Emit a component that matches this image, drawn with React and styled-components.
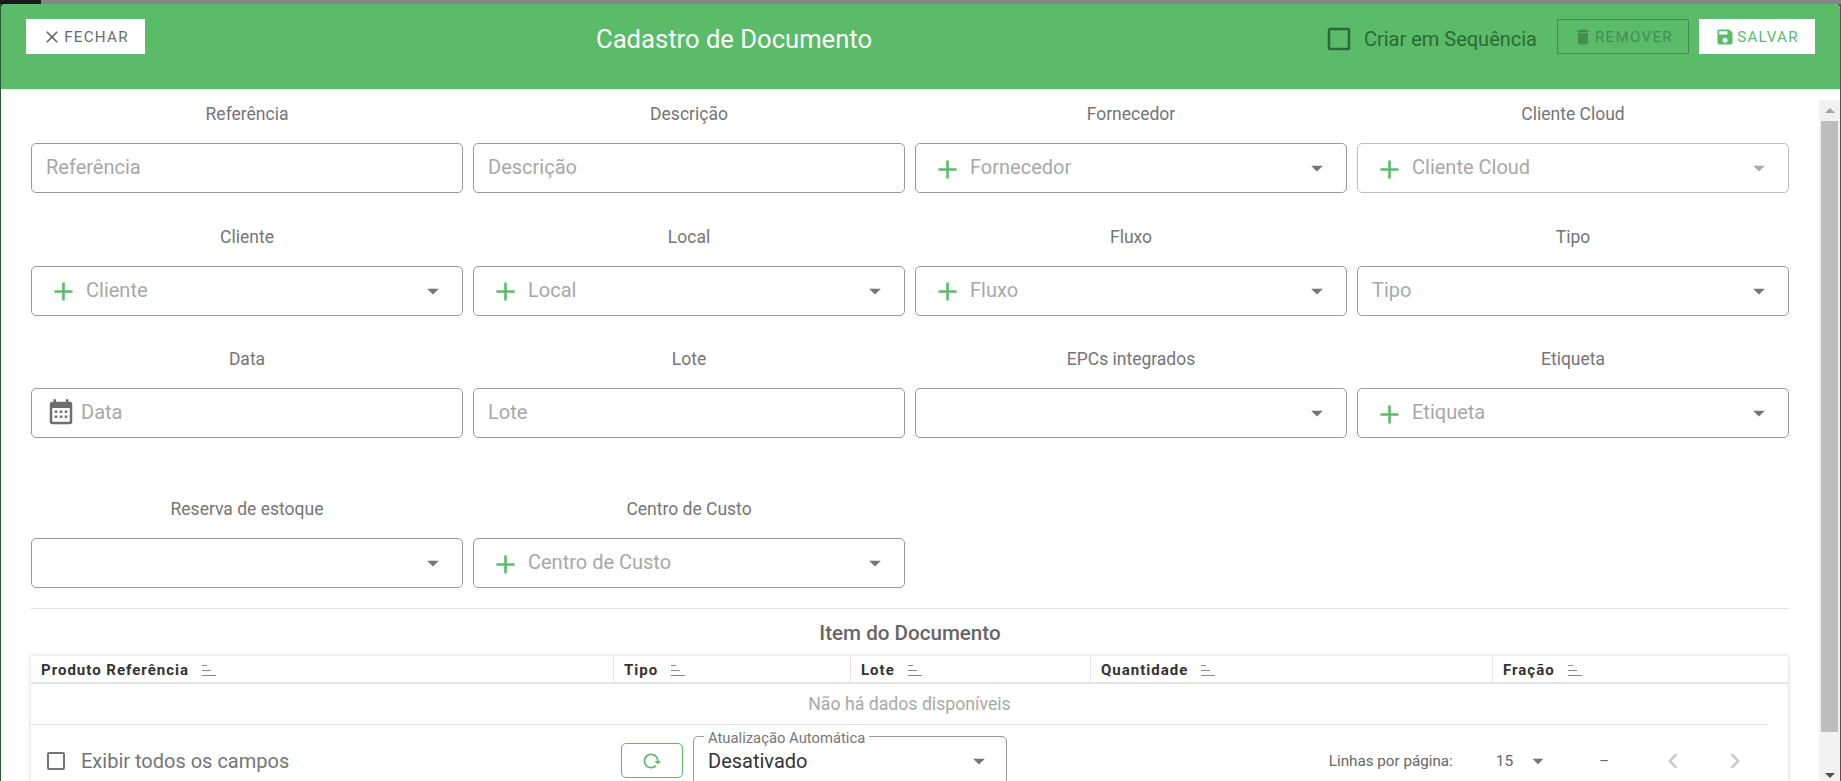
import React from 'react';
import styled, { createGlobalStyle } from 'styled-components';

const ICONS = {
  close: 'M19,6.41L17.59,5L12,10.59L6.41,5L5,6.41L10.59,12L5,17.59L6.41,19L12,13.41L17.59,19L19,17.59L13.41,12L19,6.41Z',
  trash: 'M19,4H15.5L14.5,3H9.5L8.5,4H5V6H19M6,19A2,2 0 0,0 8,21H16A2,2 0 0,0 18,19V7H6V19Z',
  save: 'M15,9H5V5H15M12,19A3,3 0 0,1 9,16A3,3 0 0,1 12,13A3,3 0 0,1 15,16A3,3 0 0,1 12,19M17,3H5C3.89,3 3,3.9 3,5V19A2,2 0 0,0 5,21H19A2,2 0 0,0 21,19V7L17,3Z',
  calendar: 'M9,10V12H7V10H9M13,10V12H11V10H13M17,10V12H15V10H17M19,3A2,2 0 0,1 21,5V19A2,2 0 0,1 19,21H5C3.89,21 3,20.1 3,19V5A2,2 0 0,1 5,3H6V1H8V3H16V1H18V3H19M19,19V8H5V19H19M9,14V16H7V14H9M13,14V16H11V14H13M17,14V16H15V14H17Z',
  plus: 'M19,13H13V19H11V13H5V11H11V5H13V11H19V13Z',
  down: 'M7,10L12,15L17,10H7Z',
  reload: 'M2 12C2 16.97 6.03 21 11 21C13.39 21 15.68 20.06 17.4 18.4L15.9 16.9C14.63 18.25 12.86 19 11 19C4.76 19 1.64 11.46 6.05 7.05C10.46 2.64 18 5.77 18 12H15L19 16H19.1L23 12H20C20 7.03 15.97 3 11 3C6.03 3 2 7.03 2 12Z',
  left: 'M15.41,16.58L10.83,12L15.41,7.41L14,6L8,12L14,18L15.41,16.58Z',
  right: 'M8.59,16.58L13.17,12L8.59,7.41L10,6L16,12L10,18L8.59,16.58Z',
  box: 'M19,3H5C3.89,3 3,3.89 3,5V19A2,2 0 0,0 5,21H19A2,2 0 0,0 21,19V5C21,3.89 20.1,3 19,3M19,5V19H5V5H19Z',
};

const Icon = ({ name, size = 24, color = 'currentColor' }) => (
  <svg width={size} height={size} viewBox="0 0 24 24" fill={color} style={{ flex: 'none' }}>
    <path d={ICONS[name]} />
  </svg>
);

const fields = [
  { label: 'Referência', placeholder: 'Referência' },
  { label: 'Descrição', placeholder: 'Descrição' },
  { label: 'Fornecedor', placeholder: 'Fornecedor', plus: true, select: true },
  { label: 'Cliente Cloud', placeholder: 'Cliente Cloud', plus: true, select: true, disabled: true },
  { label: 'Cliente', placeholder: 'Cliente', plus: true, select: true },
  { label: 'Local', placeholder: 'Local', plus: true, select: true },
  { label: 'Fluxo', placeholder: 'Fluxo', plus: true, select: true },
  { label: 'Tipo', placeholder: 'Tipo', select: true },
  { label: 'Data', placeholder: 'Data', calendar: true },
  { label: 'Lote', placeholder: 'Lote' },
  { label: 'EPCs integrados', select: true },
  { label: 'Etiqueta', placeholder: 'Etiqueta', plus: true, select: true },
];

const lastFields = [
  { label: 'Reserva de estoque', select: true },
  { label: 'Centro de Custo', placeholder: 'Centro de Custo', plus: true, select: true },
];

const columns = [
  { title: 'Produto Referência', width: 583 },
  { title: 'Tipo', width: 237 },
  { title: 'Lote', width: 240 },
  { title: 'Quantidade', width: 402 },
  { title: 'Fração', width: 295 },
];

const Field = ({ label, placeholder, plus, select, calendar, disabled }) => (
  <FieldWrap>
    <FieldLabel>{label}</FieldLabel>
    <InputBox $disabled={disabled} $plain={!plus && !calendar}>
      {plus && <PlusSlot><Icon name="plus" size={31} color="#5abb69" /></PlusSlot>}
      {calendar && <CalendarSlot><Icon name="calendar" size={30} color="#6e6e6e" /></CalendarSlot>}
      <TextInput placeholder={placeholder} readOnly />
      {select && <ArrowSlot><Icon name="down" size={28} color={disabled ? '#aaa' : '#757575'} /></ArrowSlot>}
    </InputBox>
  </FieldWrap>
);

const SortIcon = () => (
  <svg width="14" height="11" viewBox="0 0 14 11" style={{ flex: 'none' }}>
    <path d="M0 .5h5M0 5.5h9M0 10.5h14" stroke="#8a8a8a" strokeWidth="1" fill="none" />
  </svg>
);

const App = () => (
  <Page>
    <GlobalStyle />
    <Modal>
      <Header>
        <CloseButton>
          <Icon name="close" size={20} />
          Fechar
        </CloseButton>
        <Title>Cadastro de Documento</Title>
        <Actions>
          <SequenceCheck>
            <Icon name="box" size={30} color="#2b6a37" />
            <span>Criar em Sequência</span>
          </SequenceCheck>
          <RemoveButton>
            <Icon name="trash" size={20} />
            Remover
          </RemoveButton>
          <SaveButton>
            <Icon name="save" size={20} />
            Salvar
          </SaveButton>
        </Actions>
      </Header>
      <Body>
        <Form>
          <FieldGrid>
            {fields.map(f => <Field key={f.label} {...f} />)}
          </FieldGrid>
          <LastGrid>
            {lastFields.map(f => <Field key={f.label} {...f} />)}
          </LastGrid>
          <Divider />
          <SectionTitle>Item do Documento</SectionTitle>
          <Table>
            <HeadRow>
              {columns.map(c => (
                <HeadCell key={c.title} $width={c.width}>
                  {c.title}
                  <SortIcon />
                </HeadCell>
              ))}
            </HeadRow>
            <EmptyRow>Não há dados disponíveis</EmptyRow>
            <Footer>
              <ShowAll>
                <Icon name="box" size={24} color="#757575" />
                <span>Exibir todos os campos</span>
              </ShowAll>
              <RefreshButton><Icon name="reload" size={20} color="#5abb69" /></RefreshButton>
              <AutoSelect>
                <AutoLabel>Atualização Automática</AutoLabel>
                <AutoValue>Desativado</AutoValue>
                <Icon name="down" size={28} color="#757575" />
              </AutoSelect>
              <Pagination>
                <RowsLabel>Linhas por página:</RowsLabel>
                <RowsValue>15</RowsValue>
                <Icon name="down" size={26} color="#757575" />
                <PageDash>–</PageDash>
                <PageButtons>
                  <Icon name="left" size={30} color="#c8c8c8" />
                  <Icon name="right" size={30} color="#c8c8c8" />
                </PageButtons>
              </Pagination>
            </Footer>
          </Table>
        </Form>
        <Scrollbar>
          <ScrollArrow><UpTriangle /></ScrollArrow>
          <ScrollThumb />
          <ScrollArrow><DownTriangle /></ScrollArrow>
        </Scrollbar>
      </Body>
    </Modal>
  </Page>
);

const GlobalStyle = createGlobalStyle`
  * {
    box-sizing: border-box;
  }
  html, body {
    margin: 0;
    height: 100%;
    overflow: hidden;
  }
  body {
    font-family: Roboto, "Liberation Sans", sans-serif;
  }
`;

const Page = styled.div`
  height: 100vh;
  padding: 4px 1px 0;
  display: flex;
  background:
    linear-gradient(90deg, #1a1a1a 41px, #868686 41px) top / 100% 4px no-repeat,
    linear-gradient(90deg, #2a5a33 50%, #555 50%);
`;

const Modal = styled.div`
  flex: 1;
  min-width: 0;
  display: flex;
  flex-direction: column;
  background: #fff;
  border-radius: 5px 5px 0 0;
  overflow: hidden;
`;

const Header = styled.header`
  flex: none;
  height: 86px;
  padding: 15px 25px 0;
  display: flex;
  align-items: flex-start;
  background: #5abb69;
  border-bottom: 1px solid #e4f3e6;
`;

const HeaderButton = styled.button`
  height: 35px;
  padding: 0;
  display: flex;
  align-items: center;
  justify-content: center;
  gap: 2px;
  border: 0;
  border-radius: 0;
  font-family: inherit;
  font-size: 15.2px;
  letter-spacing: 1.25px;
  text-transform: uppercase;
`;

const CloseButton = styled(HeaderButton)`
  width: 119px;
  background: #fff;
  color: #6b6b6b;
`;

const Title = styled.h1`
  margin: 0 0 0 451px;
  height: 40px;
  line-height: 40px;
  font-size: 25.6px;
  font-weight: 400;
  color: #fff;
  white-space: nowrap;
`;

const Actions = styled.div`
  margin-left: auto;
  display: flex;
  align-items: flex-start;
  gap: 10px;
`;

const SequenceCheck = styled.label`
  height: 40px;
  margin-right: 10px;
  display: flex;
  align-items: center;
  gap: 10px;
  font-size: 20px;
  color: #2b6a37;
`;

const RemoveButton = styled(HeaderButton)`
  width: 132px;
  background: transparent;
  border: 1px solid #448e50;
  color: #448e50;
`;

const SaveButton = styled(HeaderButton)`
  width: 116px;
  background: #fff;
  color: #5abb69;
`;

const Body = styled.div`
  flex: 1;
  min-height: 0;
  display: flex;
  align-items: stretch;
`;

const Form = styled.main`
  flex: 1;
  min-width: 0;
  padding: 10px 30px 0;
  overflow: hidden;
`;

const FieldGrid = styled.div`
  display: grid;
  grid-template-columns: repeat(4, 432px);
  column-gap: 10px;
  row-gap: 29.5px;
`;

const LastGrid = styled(FieldGrid)`
  margin-top: 57px;
`;

const FieldWrap = styled.div`
  display: flex;
  flex-direction: column;
`;

const FieldLabel = styled.label`
  height: 28px;
  margin-bottom: 15px;
  line-height: 28px;
  text-align: center;
  font-size: 17.5px;
  color: #757575;
`;

const InputBox = styled.div`
  height: 50px;
  display: flex;
  align-items: center;
  padding-left: ${p => (p.$plain ? '14px' : '0')};
  background: #fff;
  border: 1px solid ${p => (p.$disabled ? '#bdbdbd' : '#999')};
  border-radius: 5px;
`;

const PlusSlot = styled.span`
  display: flex;
  margin: 2px 7px 0 16px;
`;

const CalendarSlot = styled.span`
  display: flex;
  margin: 0 5px 0 14px;
`;

const ArrowSlot = styled.span`
  display: flex;
  margin-right: 15px;
`;

const TextInput = styled.input`
  flex: 1;
  min-width: 0;
  height: 100%;
  padding: 0 0 2px;
  border: 0;
  outline: 0;
  background: transparent;
  font-family: inherit;
  font-size: 20px;
  color: #333;

  &::placeholder {
    color: #a8a8a8;
    opacity: 1;
  }
`;

const Divider = styled.hr`
  margin: 20px 0 0;
  height: 1px;
  border: 0;
  background: #e0e0e0;
`;

const SectionTitle = styled.h2`
  margin: 0;
  height: 47px;
  display: flex;
  align-items: center;
  justify-content: center;
  font-size: 20.6px;
  font-weight: 500;
  color: #666;
`;

const Table = styled.section`
  width: 1757px;
  background: #fff;
  box-shadow: 0 0 5px rgba(0, 0, 0, 0.18);
`;

const HeadRow = styled.div`
  display: flex;
  height: 28px;
  border-bottom: 2px solid #e4e4e4;
`;

const HeadCell = styled.div`
  width: ${p => p.$width}px;
  display: flex;
  align-items: center;
  gap: 13px;
  padding: 2px 0 0 10px;
  font-size: 15px;
  font-weight: 700;
  letter-spacing: 1px;
  color: #333;
  white-space: nowrap;
  border-right: 1px solid #e4e4e4;

  &:last-child {
    border-right: 0;
  }
`;

const EmptyRow = styled.div`
  height: 41px;
  margin-right: 20px;
  padding-left: 20px;
  display: flex;
  align-items: center;
  justify-content: center;
  font-size: 17.7px;
  color: #a8a8a8;
  border-bottom: 1px solid #e0e0e0;
`;

const Footer = styled.div`
  height: 60px;
  display: flex;
  align-items: flex-start;
  padding-top: 11px;
`;

const ShowAll = styled.label`
  width: 591px;
  height: 35px;
  margin-top: 7px;
  padding-left: 13px;
  display: flex;
  align-items: center;
  gap: 13px;
  font-size: 20px;
  color: #757575;
`;

const RefreshButton = styled.button`
  width: 62px;
  height: 35px;
  margin-top: 7px;
  margin-left: -1px;
  display: flex;
  align-items: center;
  justify-content: center;
  background: #fff;
  border: 1px solid #5abb69;
  border-radius: 5px;
`;

const AutoSelect = styled.div`
  position: relative;
  width: 314px;
  height: 50px;
  margin-left: 10px;
  padding: 0 13px 0 14px;
  display: flex;
  align-items: center;
  justify-content: space-between;
  border: 1px solid #999;
  border-radius: 5px;
`;

const AutoLabel = styled.span`
  position: absolute;
  top: -8px;
  left: 10px;
  padding: 0 4px;
  background: #fff;
  font-size: 14.8px;
  line-height: 18px;
  color: #757575;
`;

const AutoValue = styled.span`
  font-size: 20px;
  color: #333;
`;

const Pagination = styled.div`
  margin-left: auto;
  height: 35px;
  margin-top: 7px;
  padding-right: 38px;
  display: flex;
  align-items: center;
  font-size: 15px;
  color: #666;
`;

const RowsLabel = styled.span`
  font-size: 15.2px;
`;

const RowsValue = styled.span`
  margin: 0 12px 0 43px;
  font-size: 15.5px;
`;

const PageDash = styled.span`
  margin: 0 49px 0 48px;
`;

const PageButtons = styled.span`
  display: flex;
  gap: 32px;
`;

const Scrollbar = styled.div`
  flex: none;
  width: 21px;
  margin-top: 10px;
  padding: 0 2px;
  display: flex;
  flex-direction: column;
  align-items: stretch;
  background: #f1f1f1;
`;

const ScrollArrow = styled.div`
  flex: none;
  height: 21px;
  display: flex;
  align-items: center;
  justify-content: center;

  &:last-child {
    margin-top: auto;
    height: 49px;
    align-items: flex-end;
    padding-bottom: 3px;
  }
`;

const ScrollThumb = styled.div`
  flex: none;
  height: 611px;
  background: #bdbdbd;
`;

const UpTriangle = styled.span`
  width: 0;
  height: 0;
  border-left: 5px solid transparent;
  border-right: 5px solid transparent;
  border-bottom: 5px solid #a3a3a3;
`;

const DownTriangle = styled.span`
  width: 0;
  height: 0;
  border-left: 5px solid transparent;
  border-right: 5px solid transparent;
  border-top: 5px solid #505050;
`;

export default App;
